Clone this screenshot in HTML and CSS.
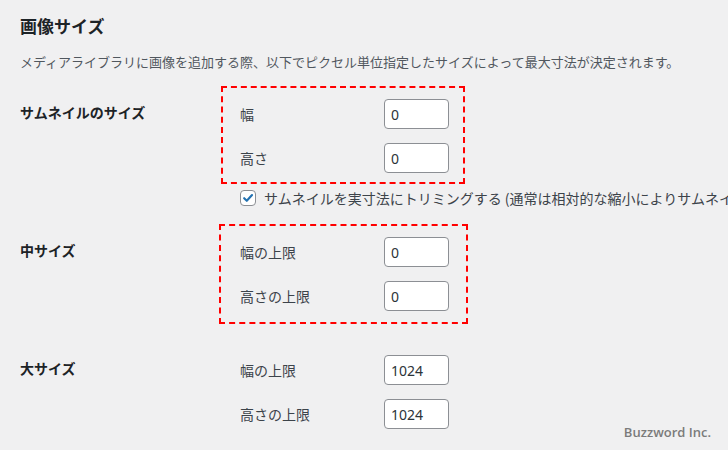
FILE: index.html
```html
<!DOCTYPE html>
<html lang="ja">
<head>
  <meta charset="UTF-8">
  <title>メディア設定</title>
  <link rel="stylesheet" href="styles.css">
</head>
<body>
  <div class="wrap">
    <h2 class="title">画像サイズ</h2>
    <p class="description">メディアライブラリに画像を追加する際、以下でピクセル単位指定したサイズによって最大寸法が決定されます。</p>

    <div class="row">
      <div class="row-label">サムネイルのサイズ</div>
      <div class="row-body">
        <div class="fields mark mark-thumb">
          <div class="field">
            <label class="field-label">幅</label>
            <input type="text" class="size-input" value="0">
          </div>
          <div class="field">
            <label class="field-label">高さ</label>
            <input type="text" class="size-input" value="0">
          </div>
        </div>
        <label class="crop">
          <span class="checkbox">
            <svg width="16" height="16" viewBox="0 0 16 16"><polyline points="3.6,8.2 6.6,11.2 12.6,4.6" fill="none" stroke="#2271b1" stroke-width="2.4" stroke-linecap="round" stroke-linejoin="round"/></svg>
          </span>
          サムネイルを実寸法にトリミングする (通常は相対的な縮小によりサムネイルを作ります)
        </label>
      </div>
    </div>

    <div class="row row-medium">
      <div class="row-label">中サイズ</div>
      <div class="row-body">
        <div class="fields mark mark-medium">
          <div class="field">
            <label class="field-label">幅の上限</label>
            <input type="text" class="size-input" value="0">
          </div>
          <div class="field">
            <label class="field-label">高さの上限</label>
            <input type="text" class="size-input" value="0">
          </div>
        </div>
      </div>
    </div>

    <div class="row row-large">
      <div class="row-label">大サイズ</div>
      <div class="row-body">
        <div class="fields plain">
          <div class="field">
            <label class="field-label">幅の上限</label>
            <input type="text" class="size-input" value="1024">
          </div>
          <div class="field">
            <label class="field-label">高さの上限</label>
            <input type="text" class="size-input" value="1024">
          </div>
        </div>
      </div>
    </div>
  </div>

  <div class="credit">Buzzword Inc.</div>
</body>
</html>
```

FILE: styles.css
```css
* {
  box-sizing: border-box;
  margin: 0;
  padding: 0;
}

body {
  background-color: #f0f0f1;
  font-family: "Noto Sans CJK JP", "Noto Sans", sans-serif;
  color: #3c434a;
  overflow: hidden;
  height: 450px;
  position: relative;
}

.wrap {
  padding: 14px 0 0 20px;
  white-space: nowrap;
}

.title {
  font-size: 17px;
  line-height: 24px;
  font-weight: 700;
  color: #1d2327;
}

.description {
  margin-top: 14px;
  font-size: 13px;
  line-height: 20px;
  color: #50575e;
}

.row {
  display: flex;
  margin-top: 14px;
}

.row-medium {
  margin-top: 16px;
}

.row-large {
  margin-top: 18px;
}

.row-label {
  width: 200px;
  flex-shrink: 0;
  padding-top: 16px;
  font-size: 14px;
  line-height: 20px;
  font-weight: 700;
  color: #1d2327;
}

.fields {
  display: flex;
  flex-direction: column;
  gap: 14px;
  border: 2px solid transparent;
}

/* red dashed marks drawn around the edited fields */
.mark {
  border: 2px dashed #ff0000;
}

.mark-thumb {
  width: 244px;
  margin-left: 1px;
  padding: 11px 14px 9px 17px;
}

.mark-medium {
  width: 249px;
  margin-left: -1px;
  padding: 11px 17px 11px 19px;
}

.plain {
  padding: 11px 0 11px 18px;
}

.field {
  display: flex;
  align-items: center;
  height: 30px;
}

.field-label {
  width: 144px;
  font-size: 14px;
  line-height: 20px;
  color: #3c434a;
}

.size-input {
  width: 65px;
  height: 30px;
  padding: 0 6px;
  border: 1px solid #8c8f94;
  border-radius: 4px;
  background-color: #fff;
  font-family: "Noto Sans", sans-serif;
  font-size: 14px;
  color: #2c3338;
  outline: none;
}

.crop {
  display: flex;
  align-items: center;
  margin: 4px 0 0 20px;
  font-size: 14px;
  line-height: 20px;
  color: #3c434a;
}

.checkbox {
  display: inline-flex;
  width: 16px;
  height: 16px;
  margin-right: 8px;
  border: 1px solid #8c8f94;
  border-radius: 4px;
  background-color: #fff;
  align-items: center;
  justify-content: center;
  flex-shrink: 0;
}

.checkbox svg {
  display: block;
}

.credit {
  position: absolute;
  right: 17px;
  bottom: 9px;
  font-family: "Open Sans", sans-serif;
  font-size: 13px;
  font-weight: 600;
  color: #7b7b7b;
}
```
